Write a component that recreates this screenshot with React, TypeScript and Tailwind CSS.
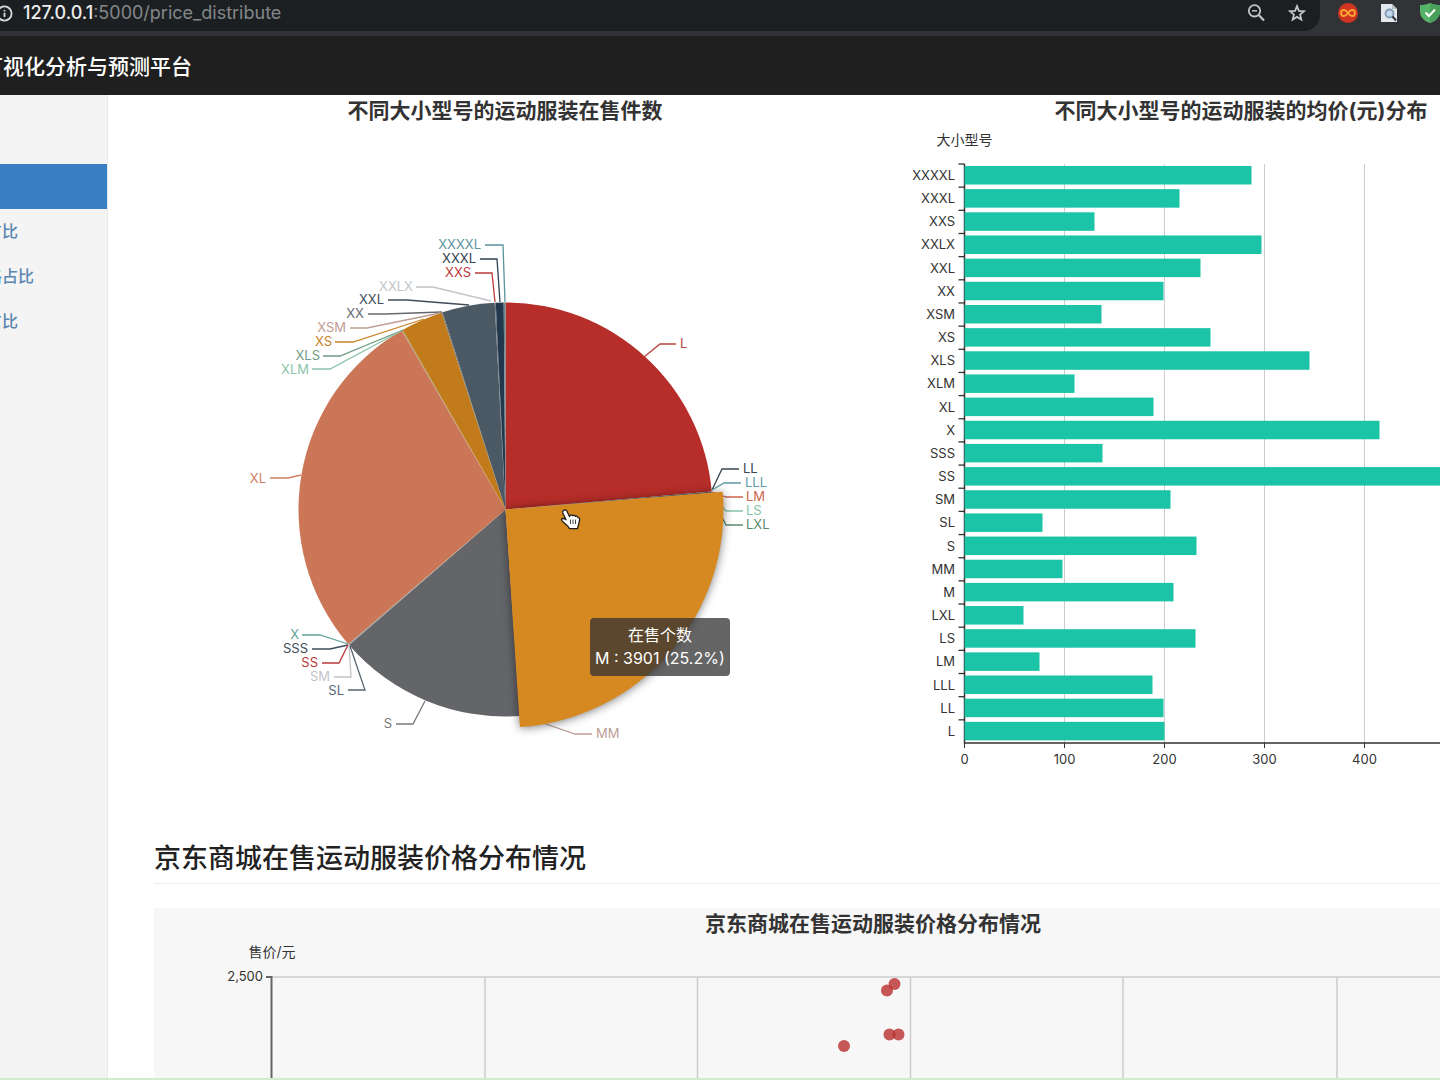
import { Info } from "lucide-react";

const PIE = { cx: 505.5, cy: 509.5, r: 207 };

type Slice = { name: string; from: number; to: number; color: string };

const slices: Slice[] = [
  { name: "L", from: 0, to: 85, color: "#b62d29" },
  { name: "LL", from: 85, to: 85.4, color: "#6b6f75" },
  { name: "S", from: 176, to: 229.1, color: "#646569" },
  { name: "SM", from: 229.1, to: 229.6, color: "#a9a39c" },
  { name: "XL", from: 229.5, to: 329.9, color: "#cb7757" },
  { name: "XLS", from: 329.9, to: 330.4, color: "#b8a070" },
  { name: "XS", from: 330.3, to: 342, color: "#c27b1b" },
  { name: "XX", from: 342, to: 342.3, color: "#7d7a66" },
  { name: "XXL", from: 342.3, to: 357, color: "#4b5964" },
  { name: "XXS", from: 357, to: 357.3, color: "#6d7480" },
  { name: "XXXL", from: 357.3, to: 359.5, color: "#22394d" },
  { name: "XXXXL", from: 359.5, to: 360, color: "#64868c" },
];

type Callout = {
  name: string;
  x: number;
  y: number;
  left?: boolean;
  points: string;
  color: string;
};

// left: the label sits on the left of its line
const callouts: Callout[] = [
  { name: "XXXXL", x: 481, y: 245, left: true, points: "505,302 503,245 485,245", color: "#5b939b" },
  { name: "XXXL", x: 476, y: 259, left: true, points: "500,302 497,259 480,259", color: "#2f4050" },
  { name: "XXS", x: 471, y: 273, left: true, points: "495,302 492,273 475,273", color: "#b8383a" },
  { name: "XXLX", x: 413, y: 287, left: true, points: "491,301 433,287 416,287", color: "#c3c4c9" },
  { name: "XXL", x: 384, y: 300, left: true, points: "469,305 407,300 388,300", color: "#414d58" },
  { name: "XX", x: 364, y: 314, left: true, points: "442,312 385,314 368,314", color: "#66686d" },
  { name: "XSM", x: 346, y: 328, left: true, points: "440,313 367,328 350,328", color: "#bf9d94" },
  { name: "XS", x: 332, y: 342, left: true, points: "424,319 353,342 335,342", color: "#c9842a" },
  { name: "XLS", x: 320, y: 356, left: true, points: "403,330 340,356 323,356", color: "#6f9a83" },
  { name: "XLM", x: 309, y: 370, left: true, points: "401,331 330,369 312,369", color: "#8cc4aa" },
  { name: "XL", x: 266, y: 479, left: true, points: "301,475 288,478 270,478", color: "#cf8062" },
  { name: "X", x: 299, y: 635, left: true, points: "348,644 320,635 302,635", color: "#5fa297" },
  { name: "SSS", x: 308, y: 649, left: true, points: "348,645 330,649 312,649", color: "#3c4d5b" },
  { name: "SS", x: 318, y: 663, left: true, points: "348,645 339,663 322,663", color: "#b8383a" },
  { name: "SM", x: 330, y: 677, left: true, points: "349,645 351,677 334,677", color: "#c3c4c9" },
  { name: "SL", x: 344, y: 691, left: true, points: "350,646 365,690 348,690", color: "#546570" },
  { name: "S", x: 392, y: 724, left: true, points: "425,701 413,724 396,724", color: "#77797d" },
  { name: "L", x: 680, y: 344, points: "644,357 660,344 676,344", color: "#b94340" },
  { name: "LL", x: 743, y: 469, points: "712,490 722,469 739,469", color: "#394551" },
  { name: "LLL", x: 745, y: 483, points: "712,490 724,483 741,483", color: "#5d9ba6" },
  { name: "LM", x: 746, y: 497, points: "712,492 726,497 743,497", color: "#d0664c" },
  { name: "LS", x: 746, y: 511, points: "712,494 726,511 743,511", color: "#86c4a8" },
  { name: "LXL", x: 746, y: 525, points: "712,497 726,525 743,525", color: "#5b8a70" },
  { name: "MM", x: 596, y: 734, points: "540,722 575,734 592,734", color: "#bd9e96" },
];

const prices = [
  { size: "XXXXL", price: 287 },
  { size: "XXXL", price: 215 },
  { size: "XXS", price: 130 },
  { size: "XXLX", price: 297 },
  { size: "XXL", price: 236 },
  { size: "XX", price: 199 },
  { size: "XSM", price: 137 },
  { size: "XS", price: 246 },
  { size: "XLS", price: 345 },
  { size: "XLM", price: 110 },
  { size: "XL", price: 189 },
  { size: "X", price: 415 },
  { size: "SSS", price: 138 },
  { size: "SS", price: 530 },
  { size: "SM", price: 206 },
  { size: "SL", price: 78 },
  { size: "S", price: 232 },
  { size: "MM", price: 98 },
  { size: "M", price: 209 },
  { size: "LXL", price: 59 },
  { size: "LS", price: 231 },
  { size: "LM", price: 75 },
  { size: "LLL", price: 188 },
  { size: "LL", price: 199 },
  { size: "L", price: 200 },
];

const dots = [
  [844, 1046],
  [887, 990.5],
  [894.5, 984],
  [889.5, 1034.5],
  [898.5, 1034.5],
];

function arc(from: number, to: number, r: number) {
  const point = (deg: number) => {
    const a = (deg * Math.PI) / 180;
    return `${PIE.cx + r * Math.sin(a)},${PIE.cy - r * Math.cos(a)}`;
  };
  const large = to - from > 180 ? 1 : 0;
  return `M${PIE.cx},${PIE.cy} L${point(from)} A${r},${r} 0 ${large} 1 ${point(to)} Z`;
}

function BrowserBar() {
  return (
    <div className="flex shrink-0 bg-[#323337] pb-[5px]">
      <div className="flex h-[31px] flex-1 items-center rounded-br-2xl bg-[#1b1f21] pr-[13px] pb-[5px]">
        <button aria-label="Site information" className="-ml-1 text-[#d5d7d8]">
          <Info size={17} strokeWidth={2.6} />
        </button>
        <div className="flex-1 pl-[10px] text-[18px] leading-5 text-[#84878a]">
          <span className="font-medium text-[#eceded]">127.0.0.1</span>:5000/price_distribute
        </div>
        <div className="flex gap-[21px] text-[#c3c5c7]">
          <button aria-label="Zoom">
            <svg width="20" height="20" viewBox="0 0 20 20" fill="none" stroke="currentColor" strokeWidth="1.800">
              <circle cx="8.500" cy="7.800" r="5.700" />
              <path d="M12.700 12 18 17.500" strokeWidth="2.200" />
              <path d="M6 7.800h5" strokeWidth="1.500" />
            </svg>
          </button>
          <button aria-label="Bookmark">
            <svg width="20" height="20" viewBox="0 0 20 20" fill="none" stroke="currentColor" strokeWidth="1.800">
              <path d="m10 3.200 1.900 4.700 5.100.4-3.900 3.300 1.200 5-4.300-2.700-4.300 2.700 1.200-5L3 8.300l5.100-.4Z" />
            </svg>
          </button>
        </div>
      </div>
      <div className="flex h-[31px] items-center gap-[21px] pb-[5px] pl-[18px]">
        <button aria-label="Infinity extension">
          <svg width="20" height="20" viewBox="0 0 20 20" fill="none">
            <circle cx="10" cy="10" r="10" fill="#cf3520" />
            <path
              d="M10 10C8.600 7.900 7.500 7 6 7a3 3 0 0 0 0 6c1.500 0 2.600-.9 4-3s2.500-3 4-3a3 3 0 0 1 0 6c-1.500 0-2.600-.9-4-3Z"
              stroke="#ffa536"
              strokeWidth="1.800"
            />
          </svg>
        </button>
        <button aria-label="Page search extension">
          <svg width="20" height="20" viewBox="0 0 20 20" fill="none">
            <path d="M2 1h11l5 5v13H2Z" fill="#e3e8ee" />
            <path d="M13 1v5h5Z" fill="#b4bcc6" />
            <circle cx="10.500" cy="10.500" r="4" fill="#c3d5ea" stroke="#8198b5" strokeWidth="1.800" />
            <path d="M13.500 13.500 17 17.500" stroke="#30343a" strokeWidth="2" />
          </svg>
        </button>
        <button aria-label="Shield extension">
          <svg width="20" height="20" viewBox="0 0 20 20" fill="none">
            <path d="M10 0c3 1.400 6.500 2 10 2v6c0 6-4 10-10 12C4 18 0 14 0 8V2c3.500 0 7-.6 10-2Z" fill="#57b368" />
            <path d="M10 0c3 1.400 6.500 2 10 2v6c0 6-4 10-10 12Z" fill="#48a05a" />
            <path d="m5.500 9.500 3.500 3.500 6-6.500" stroke="#fff" strokeWidth="2" />
          </svg>
        </button>
      </div>
    </div>
  );
}

function Sidebar() {
  return (
    <nav className="w-[108px] shrink-0 border-r border-[#e9e9e9] bg-[#f4f4f4] pt-[69px]">
      <ul className="-ml-[14px] whitespace-nowrap text-base font-medium text-[#5b86b0]">
        <li>
          <a href="#size" aria-label="大小型号" className="block h-[45px] bg-[#3a7fc4]" />
        </li>
        <li>
          <a href="#share-1" className="block leading-[45px]">占比</a>
        </li>
        <li>
          <a href="#share-2" className="block leading-[45px]">格占比</a>
        </li>
        <li>
          <a href="#share-3" className="block leading-[45px]">占比</a>
        </li>
      </ul>
    </nav>
  );
}

function ChartTitle({ children }: { children: React.ReactNode }) {
  return <h3 className="text-center text-[21px] leading-8 font-bold text-[#333]">{children}</h3>;
}

function SizePie() {
  return (
    <div className="relative">
      <ChartTitle>不同大小型号的运动服装在售件数</ChartTitle>
      <svg viewBox="154 127 702 698" className="block w-full text-[13px]">
        {slices.map((s) => (
          <path key={s.name} d={arc(s.from, s.to, PIE.r)} fill={s.color} />
        ))}
        {callouts.map((c) => (
          <g key={c.name}>
            <polyline points={c.points} fill="none" stroke={c.color} strokeWidth="1.300" />
            <text x={c.x} y={c.y + 4} fill={c.color} textAnchor={c.left ? "end" : "start"}>
              {c.name}
            </text>
          </g>
        ))}
        {/* hovered slice */}
        <path
          d={arc(85.3, 176.2, 218)}
          fill="#d68821"
          className="drop-shadow-[0_1px_5px_rgba(0,0,0,0.5)]"
        />
        {/* hand cursor */}
        <path
          d="M563.500 510.500c1.500-1.200 3-.5 3.600 1l2.400 5 .8-1.200c1-.8 2.200-.5 2.600.6.9-.9 2.200-.6 2.700.5 1-.5 2.200 0 2.500 1.200 1.200 0 1.700 1 1.500 2.400l-1 4.600c-.3 1.400-1 2-1 4h-8.200c-1-2.500-3.200-4-5.400-5.800-1.800-1.600-3-2.600-2.400-3.600.6-1.100 2.500-.9 4.400.5l-3.300-7c-.3-1 .1-1.600.8-2.200Z"
          fill="#fff"
          stroke="#1c1c1c"
          strokeWidth="1.300"
          strokeLinejoin="round"
        />
        <path d="M570.500 519.500v4.500M573 519.500v4.500M575.500 519.500v4.500" stroke="#444" />
      </svg>
      <div className="absolute top-[523px] left-[436px] rounded bg-[#323232]/75 px-[5px] py-[6px] text-center text-base leading-[23px] whitespace-nowrap text-white">
        <div>在售个数</div>
        <div>M : 3901 (25.2%)</div>
      </div>
    </div>
  );
}

function PriceBars() {
  const x0 = 964.5;
  const top = 164;
  const bottom = 743;
  const step = (bottom - top) / prices.length;

  return (
    <div>
      <ChartTitle>不同大小型号的运动服装的均价(元)分布</ChartTitle>
      <svg viewBox="890 127 702 698" className="block w-full text-[13px]" fill="#333">
        <text x={x0} y={145} textAnchor="middle" className="text-[14px]">
          大小型号
        </text>
        {[0, 100, 200, 300, 400, 500, 600].map((v) => (
          <g key={v}>
            {v > 0 && <path d={`M${x0 + v} ${top}V${bottom}`} stroke="#ccc" />}
            <path d={`M${x0 + v} ${bottom}v5`} stroke="#333" />
            <text x={x0 + v} y={764} textAnchor="middle">
              {v}
            </text>
          </g>
        ))}
        <path d={`M${x0} ${top}V${bottom}H1592`} fill="none" stroke="#333" strokeWidth="1.500" />
        {prices.map((p, i) => (
          <g key={p.size}>
            <path d={`M${x0} ${top + i * step}h-6`} stroke="#333" strokeWidth="1.300" />
            <rect x={x0} y={top + i * step + 2} width={p.price} height={18.5} fill="#1bc4a6" />
            <text x={955} y={top + i * step + 16} textAnchor="end">
              {p.size}
            </text>
          </g>
        ))}
      </svg>
    </div>
  );
}

function PriceScatter() {
  return (
    <div className="mt-6 bg-[#f7f7f7]">
      <ChartTitle>京东商城在售运动服装价格分布情况</ChartTitle>
      <svg viewBox="154 940 1438 640" className="block w-full text-[13px]" fill="#333">
        <text x={272} y={957} textAnchor="middle" className="text-[14px]">
          售价/元
        </text>
        <text x={263} y={981} textAnchor="end">
          2,500
        </text>
        <path d="M272 977H1592" stroke="#ccc" strokeWidth="1.500" />
        {[485, 697.5, 910.5, 1123, 1337, 1550].map((x) => (
          <path key={x} d={`M${x} 977V1500`} stroke="#ccc" strokeWidth="1.500" />
        ))}
        <path d="M266 977H271.500V1500" fill="none" stroke="#666" strokeWidth="2" />
        {dots.map(([x, y]) => (
          <circle key={`${x}-${y}`} cx={x} cy={y} r="6" fill="#b8302d" fillOpacity="0.8" />
        ))}
      </svg>
    </div>
  );
}

export default function App() {
  return (
    <div className="flex h-screen flex-col overflow-hidden bg-white font-['Inter','Noto_Sans_CJK_SC',sans-serif]">
      <BrowserBar />
      <header className="shrink-0 overflow-hidden bg-[#1f1f1f] pt-[2px]">
        <a href="#home" className="-ml-[18px] block text-[21px] leading-[57px] font-medium whitespace-nowrap text-white">
          可视化分析与预测平台
        </a>
      </header>
      <div className="flex min-h-0 flex-1 overflow-hidden">
        <Sidebar />
        <main className="min-w-0 flex-1 overflow-hidden pl-[46px]">
          <div className="min-w-[1438px]">
            <div className="grid grid-cols-2 gap-[34px]">
              <SizePie />
              <PriceBars />
            </div>
            <h2 className="mt-[18px] border-b border-[#eee] pb-2 text-[27px] leading-8 font-medium text-[#222]">
              京东商城在售运动服装价格分布情况
            </h2>
            <PriceScatter />
          </div>
        </main>
      </div>
      <div className="h-[2px] shrink-0 bg-[#cdeec8]" />
    </div>
  );
}
